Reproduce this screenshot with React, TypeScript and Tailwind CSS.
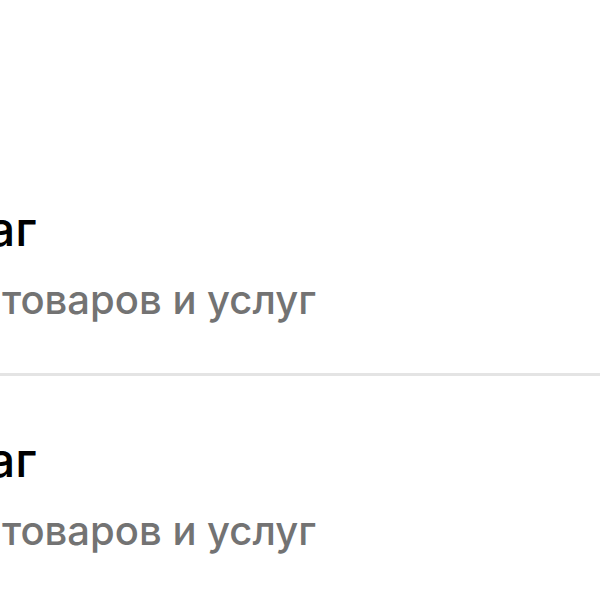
export default function App() {
  const rows = [0, 1];
  return (
    <div className="w-[600px] h-[600px] bg-white overflow-hidden" style={{ fontFamily: 'Inter, sans-serif' }}>
      <div className="pt-[199px]">
        {rows.map((i) => (
          <div key={i} className={i === 0 ? "border-b-[3px] border-[#e4e4e4] pb-[48px]" : "pt-[54px]"}>
            <div className="-ml-[12px] text-[48px] font-medium leading-[60px] text-black whitespace-nowrap">аг</div>
            <div className="mt-[16px] pl-[2px] text-[40px] font-medium leading-[50px] text-[#737373] whitespace-nowrap">товаров и услуг</div>
          </div>
        ))}
      </div>
    </div>
  );
}
